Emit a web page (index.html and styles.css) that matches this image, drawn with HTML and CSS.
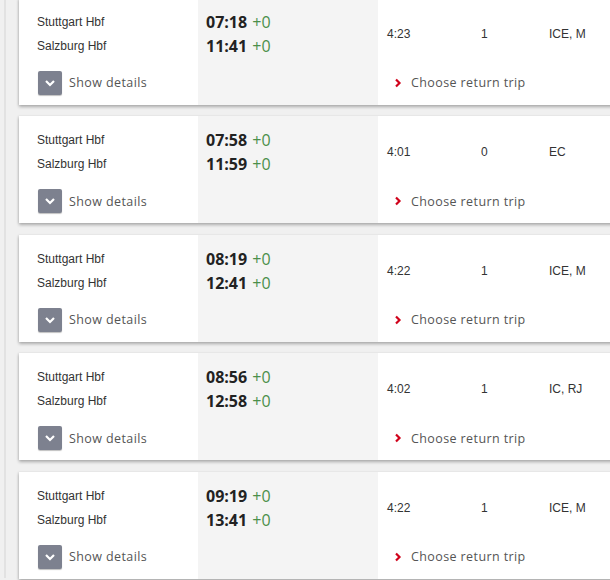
FILE: index.html
```html
<!DOCTYPE html>
<html>
<head>
<meta charset="utf-8">
<link rel="stylesheet" href="styles.css">
</head>
<body>
<div class="page">
  <div class="list">
    <div class="card">
      <div class="col-stations">
        <div class="station">Stuttgart Hbf</div>
        <div class="station">Salzburg Hbf</div>
        <div class="details"><span class="dbtn"><svg width="12" height="8" viewBox="0 0 12 8"><path d="M2 2 L6 6 L10 2" fill="none" stroke="#fff" stroke-width="2.2"/></svg></span><span class="dtext">Show details</span></div>
      </div>
      <div class="col-times">
        <div class="time">07:18 <span class="delay">+0</span></div>
        <div class="time">11:41 <span class="delay">+0</span></div>
      </div>
      <div class="col-info">
        <div class="info"><span class="dur">4:23</span><span class="chg">1</span><span class="prod">ICE, M</span></div>
        <div class="ret"><svg width="8" height="10" viewBox="0 0 8 10"><path d="M2 1.5 L5.5 5 L2 8.5" fill="none" stroke="#d0021b" stroke-width="2.2"/></svg><span>Choose return trip</span></div>
      </div>
    </div>
    <div class="card">
      <div class="col-stations">
        <div class="station">Stuttgart Hbf</div>
        <div class="station">Salzburg Hbf</div>
        <div class="details"><span class="dbtn"><svg width="12" height="8" viewBox="0 0 12 8"><path d="M2 2 L6 6 L10 2" fill="none" stroke="#fff" stroke-width="2.2"/></svg></span><span class="dtext">Show details</span></div>
      </div>
      <div class="col-times">
        <div class="time">07:58 <span class="delay">+0</span></div>
        <div class="time">11:59 <span class="delay">+0</span></div>
      </div>
      <div class="col-info">
        <div class="info"><span class="dur">4:01</span><span class="chg">0</span><span class="prod">EC</span></div>
        <div class="ret"><svg width="8" height="10" viewBox="0 0 8 10"><path d="M2 1.5 L5.5 5 L2 8.5" fill="none" stroke="#d0021b" stroke-width="2.2"/></svg><span>Choose return trip</span></div>
      </div>
    </div>
    <div class="card">
      <div class="col-stations">
        <div class="station">Stuttgart Hbf</div>
        <div class="station">Salzburg Hbf</div>
        <div class="details"><span class="dbtn"><svg width="12" height="8" viewBox="0 0 12 8"><path d="M2 2 L6 6 L10 2" fill="none" stroke="#fff" stroke-width="2.2"/></svg></span><span class="dtext">Show details</span></div>
      </div>
      <div class="col-times">
        <div class="time">08:19 <span class="delay">+0</span></div>
        <div class="time">12:41 <span class="delay">+0</span></div>
      </div>
      <div class="col-info">
        <div class="info"><span class="dur">4:22</span><span class="chg">1</span><span class="prod">ICE, M</span></div>
        <div class="ret"><svg width="8" height="10" viewBox="0 0 8 10"><path d="M2 1.5 L5.5 5 L2 8.5" fill="none" stroke="#d0021b" stroke-width="2.2"/></svg><span>Choose return trip</span></div>
      </div>
    </div>
    <div class="card">
      <div class="col-stations">
        <div class="station">Stuttgart Hbf</div>
        <div class="station">Salzburg Hbf</div>
        <div class="details"><span class="dbtn"><svg width="12" height="8" viewBox="0 0 12 8"><path d="M2 2 L6 6 L10 2" fill="none" stroke="#fff" stroke-width="2.2"/></svg></span><span class="dtext">Show details</span></div>
      </div>
      <div class="col-times">
        <div class="time">08:56 <span class="delay">+0</span></div>
        <div class="time">12:58 <span class="delay">+0</span></div>
      </div>
      <div class="col-info">
        <div class="info"><span class="dur">4:02</span><span class="chg">1</span><span class="prod">IC, RJ</span></div>
        <div class="ret"><svg width="8" height="10" viewBox="0 0 8 10"><path d="M2 1.5 L5.5 5 L2 8.5" fill="none" stroke="#d0021b" stroke-width="2.2"/></svg><span>Choose return trip</span></div>
      </div>
    </div>
    <div class="card">
      <div class="col-stations">
        <div class="station">Stuttgart Hbf</div>
        <div class="station">Salzburg Hbf</div>
        <div class="details"><span class="dbtn"><svg width="12" height="8" viewBox="0 0 12 8"><path d="M2 2 L6 6 L10 2" fill="none" stroke="#fff" stroke-width="2.2"/></svg></span><span class="dtext">Show details</span></div>
      </div>
      <div class="col-times">
        <div class="time">09:19 <span class="delay">+0</span></div>
        <div class="time">13:41 <span class="delay">+0</span></div>
      </div>
      <div class="col-info">
        <div class="info"><span class="dur">4:22</span><span class="chg">1</span><span class="prod">ICE, M</span></div>
        <div class="ret"><svg width="8" height="10" viewBox="0 0 8 10"><path d="M2 1.5 L5.5 5 L2 8.5" fill="none" stroke="#d0021b" stroke-width="2.2"/></svg><span>Choose return trip</span></div>
      </div>
    </div>
  </div>
</div>
</body>
</html>
```

FILE: styles.css
```css
html, body {
  margin: 0;
  padding: 0;
  height: 100%;
  overflow: hidden;
  background: #f0f0f0;
}
.page {
  height: 100%;
  margin-left: 4px;
  border-left: 2px solid #e2e2e2;
  padding-left: 13px;
  background: #f0f0f0;
}
.list {
  margin-top: -2.5px;
  display: flex;
  flex-direction: column;
  gap: 11.5px;
}
.card {
  height: 107px;
  width: 620px;
  background: #fff;
  display: flex;
  box-shadow: 0 2px 3px rgba(0,0,0,0.28), -1px 0 2px rgba(0,0,0,0.08);
}
.col-stations {
  width: 161px;
  padding: 12px 0 0 18px;
  font-family: "Liberation Sans", Arial, sans-serif;
  font-size: 12px;
  color: #333;
}
.station {
  height: 24px;
  line-height: 24px;
}
.details {
  margin-top: 13px;
  display: flex;
  align-items: center;
  gap: 7px;
  margin-left: 1px;
}
.dbtn {
  width: 24px;
  height: 24px;
  background: #7d818f;
  border-radius: 2px;
  box-shadow: 0 1px 1px rgba(0,0,0,0.25);
  display: flex;
  align-items: center;
  justify-content: center;
}
.dtext, .ret span {
  font-family: "Open Sans", sans-serif;
  font-size: 12.5px;
  letter-spacing: 0.4px;
  color: #555;
}
.col-times {
  width: 180px;
  background: #f4f4f4;
  padding: 12px 0 0 8px;
  box-sizing: border-box;
  font-family: "Open Sans", sans-serif;
}
.time {
  height: 24px;
  line-height: 24px;
  font-size: 16px;
  font-weight: 700;
  color: #222;
}
.delay {
  font-weight: 400;
  color: #4a8f4a;
  margin-left: 1px;
}
.col-info {
  flex: 1;
  padding-top: 24px;
  font-family: "Liberation Sans", Arial, sans-serif;
  font-size: 12px;
  color: #333;
}
.info {
  display: grid;
  grid-template-columns: 94px 68px auto;
  padding-left: 9px;
  height: 24px;
  line-height: 24px;
}
.ret {
  margin-top: 25px;
  display: flex;
  align-items: center;
  gap: 9px;
  padding-left: 16px;
  height: 24px;
}
```
